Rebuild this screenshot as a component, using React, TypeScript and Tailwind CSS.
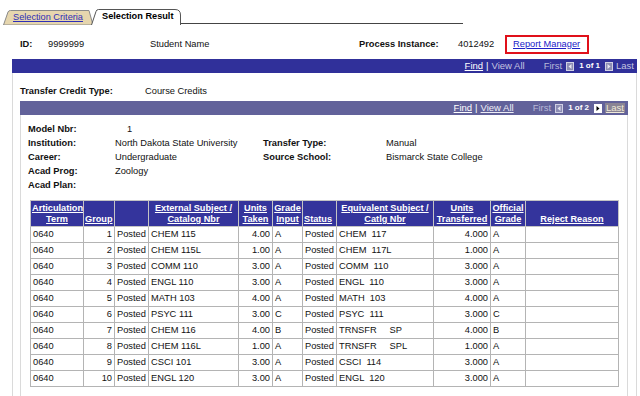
// Transfer credit "Selection Result" page, PeopleSoft style.
const ROWS = [
  { grp: 1, ext: "CHEM 115", taken: "4.00", gi: "A", eq: "CHEM  117", xfer: "4.000", og: "A" },
  { grp: 2, ext: "CHEM 115L", taken: "1.00", gi: "A", eq: "CHEM  117L", xfer: "1.000", og: "A" },
  { grp: 3, ext: "COMM 110", taken: "3.00", gi: "A", eq: "COMM  110", xfer: "3.000", og: "A" },
  { grp: 4, ext: "ENGL 110", taken: "3.00", gi: "A", eq: "ENGL  110", xfer: "3.000", og: "A" },
  { grp: 5, ext: "MATH 103", taken: "4.00", gi: "A", eq: "MATH  103", xfer: "4.000", og: "A" },
  { grp: 6, ext: "PSYC 111", taken: "3.00", gi: "C", eq: "PSYC  111", xfer: "3.000", og: "C" },
  { grp: 7, ext: "CHEM 116", taken: "4.00", gi: "B", eq: "TRNSFR     SP", xfer: "4.000", og: "B" },
  { grp: 8, ext: "CHEM 116L", taken: "1.00", gi: "A", eq: "TRNSFR     SPL", xfer: "1.000", og: "A" },
  { grp: 9, ext: "CSCI 101", taken: "3.00", gi: "A", eq: "CSCI  114", xfer: "3.000", og: "A" },
  { grp: 10, ext: "ENGL 120", taken: "3.00", gi: "A", eq: "ENGL  120", xfer: "3.000", og: "A" },
];

const COLS = [53, 31, 34, 90, 34, 30, 34, 97, 57, 35, 93];

function Arrow({ dir, enabled }: { dir: "l" | "r"; enabled: boolean }) {
  return (
    <svg width="8" height="9" viewBox="0 0 8 9" className="shrink-0">
      <rect x="0.5" y="0.5" width="7" height="8" fill={enabled ? "#ffffff" : "#8c8cb4"} stroke={enabled ? "#ffffff" : "#d0d0e4"} />
      {dir === "l" ? (
        <path d="M5.5 2 L2.5 4.5 L5.5 7 Z" fill={enabled ? "#000" : "#e4e4f0"} />
      ) : (
        <path d="M2.5 2 L5.5 4.5 L2.5 7 Z" fill={enabled ? "#000" : "#e4e4f0"} />
      )}
    </svg>
  );
}

function NavBar({ total, inner }: { total: number; inner?: boolean }) {
  return (
    <div
      className={`flex h-[14px] items-center justify-end pr-[3px] text-[9.5px] leading-none ${
        inner ? "bg-[#62629a]" : "bg-[#30309a]"
      }`}
    >
      <span className="text-white underline">Find</span>
      <span className="mx-[3px] text-white">|</span>
      <span className={inner ? "text-[#eeeef6] underline" : "text-[#c4c4e0]"}>View All</span>
      <span className="ml-[19px] mr-[4px] text-[#b8b8d8]">First</span>
      <Arrow dir="l" enabled={false} />
      <span className="mx-[5px] text-[8px] font-bold text-white">1 of {total}</span>
      <Arrow dir="r" enabled={!!inner} />
      <span className={`ml-[3px] ${inner ? "bg-[#8a8494] px-[1px] text-[#f0ead8] underline" : "text-[#c4c4e0]"}`}>
        Last
      </span>
    </div>
  );
}

function Tabs() {
  return (
    <div className="flex h-[25px] items-end pl-[3px]">
      <div className="relative flex h-[15px] w-[90px] items-center pl-[10px]">
        <svg className="absolute inset-0" width="90" height="15" viewBox="0 0 90 15">
          <path d="M0.5 15 L5 2 Q5.6 0.5 7.5 0.5 L86 0.5 L90 15 Z" fill="#e6d6ae" stroke="#8a8a8a" />
        </svg>
        <span className="relative text-[9.2px] text-[#2e2eb8] underline">Selection Criteria</span>
      </div>
      <div className="relative -ml-[2px] flex h-[16px] w-[90px] items-center pl-[11px]">
        <svg className="absolute inset-0" width="90" height="16" viewBox="0 0 90 16">
          <path d="M0.5 16 L5 2.5 Q5.6 0.5 7.5 0.5 L84 0.5 Q89.5 0.5 89.5 6 L89.5 16" fill="#ffffff" stroke="#555" />
        </svg>
        <span className="relative text-[9.2px] font-bold text-black">Selection Result</span>
      </div>
      <div className="mb-[1px] h-px w-[282px] bg-[#444]" />
    </div>
  );
}

function Field({ label, value, pad }: { label: string; value: string; pad?: boolean }) {
  return (
    <>
      <span className="font-bold">{label}</span>
      <span className={pad ? "pl-[12px]" : ""}>{value}</span>
    </>
  );
}

export default function App() {
  return (
    <div className="h-[396px] w-[640px] overflow-hidden bg-white font-['Liberation_Sans',Arial,sans-serif] text-[9.3px] text-[#111]">
      <Tabs />

      {/* header line */}
      <div className="mt-[10px] flex h-[19px] items-center pl-[20px]">
        <span className="w-[28px] font-bold">ID:</span>
        <span className="w-[102px]">9999999</span>
        <span className="w-[209px]">Student Name</span>
        <span className="w-[99px] font-bold">Process Instance:</span>
        <span className="w-[47px]">4012492</span>
        <div className="flex h-[19px] w-[84px] items-center border-2 border-[#e0101a] pl-[6px]">
          <span className="text-[#2020c8] underline">Report Manager</span>
        </div>
      </div>

      <div className="ml-[12px] mt-[5px] w-[625px]">
        <NavBar total={1} />
        <div className="h-[330px] border-x border-[#dadada]">
          <div className="flex h-[28px] items-center pl-[7px] pt-[10px]">
            <span className="w-[125px] font-bold">Transfer Credit Type:</span>
            <span>Course Credits</span>
          </div>

          <div className="ml-[7px] w-[608px]">
            <NavBar total={2} inner />
            <div className="h-[290px] border-x border-[#dadada]">
              <div className="grid grid-cols-[87px_148px_123px_1fr] auto-rows-[14px] items-center pl-[7px] pt-[8px]">
                <Field label="Model Nbr:" value="1" pad />
                <span />
                <span />
                <Field label="Institution:" value="North Dakota State University" />
                <Field label="Transfer Type:" value="Manual" />
                <Field label="Career:" value="Undergraduate" />
                <Field label="Source School:" value="Bismarck State College" />
                <Field label="Acad Prog:" value="Zoology" />
                <span />
                <span />
                <span className="font-bold">Acad Plan:</span>
              </div>

              <table className="ml-[9px] mt-[7px] w-[588px] table-fixed border-collapse">
                <colgroup>
                  {COLS.map((w, i) => (
                    <col key={i} style={{ width: w }} />
                  ))}
                </colgroup>
                <thead>
                  <tr className="h-[26px] bg-[#34349c] align-bottom text-[9.2px] font-bold leading-[11px] text-white underline">
                    <th className="border border-[#c4c4c4] px-px pb-[1px]">Articulation Term</th>
                    <th className="border border-[#c4c4c4] px-px pb-[1px] text-left">Group</th>
                    <th className="border border-[#c4c4c4]" />
                    <th className="border border-[#c4c4c4] px-px pb-[1px]">External Subject / Catalog Nbr</th>
                    <th className="border border-[#c4c4c4] px-px pb-[1px]">Units Taken</th>
                    <th className="border border-[#c4c4c4] px-px pb-[1px]">Grade Input</th>
                    <th className="border border-[#c4c4c4] px-px pb-[1px] text-left">Status</th>
                    <th className="border border-[#c4c4c4] px-px pb-[1px]">Equivalent Subject / Catlg Nbr</th>
                    <th className="border border-[#c4c4c4] px-px pb-[1px]">Units Transferred</th>
                    <th className="border border-[#c4c4c4] px-px pb-[1px]">Official Grade</th>
                    <th className="border border-[#c4c4c4] px-px pb-[1px]">Reject Reason</th>
                  </tr>
                </thead>
                <tbody>
                  {ROWS.map((r) => (
                    <tr key={r.grp} className="h-[16px] leading-none">
                      <td className="border border-[#b4b4b4] pl-[2px]">0640</td>
                      <td className="border border-[#b4b4b4] pr-[2px] text-right">{r.grp}</td>
                      <td className="border border-[#b4b4b4] pl-[2px]">Posted</td>
                      <td className="border border-[#b4b4b4] pl-[2px]">{r.ext}</td>
                      <td className="border border-[#b4b4b4] pr-[2px] text-right">{r.taken}</td>
                      <td className="border border-[#b4b4b4] pl-[2px]">{r.gi}</td>
                      <td className="border border-[#b4b4b4] pl-[2px]">Posted</td>
                      <td className="whitespace-pre border border-[#b4b4b4] pl-[2px]">{r.eq}</td>
                      <td className="border border-[#b4b4b4] pr-[2px] text-right">{r.xfer}</td>
                      <td className="border border-[#b4b4b4] pl-[2px]">{r.og}</td>
                      <td className="border border-[#b4b4b4]" />
                    </tr>
                  ))}
                </tbody>
              </table>
            </div>
          </div>
        </div>
      </div>
    </div>
  );
}
